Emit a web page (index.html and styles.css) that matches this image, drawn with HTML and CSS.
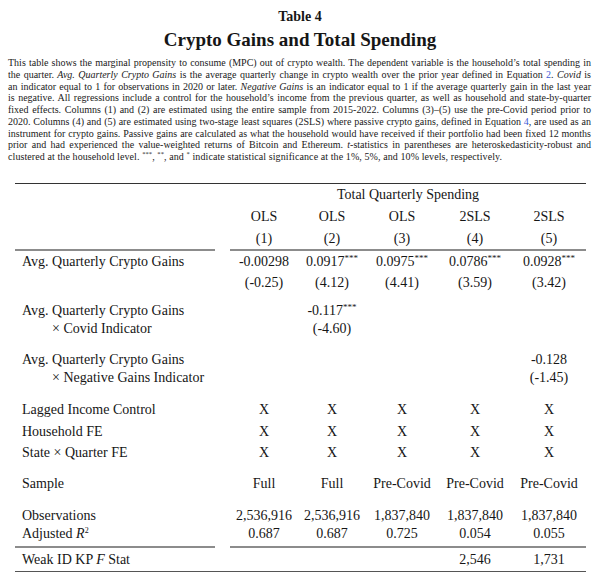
FILE: index.html
```html
<!DOCTYPE html>
<html lang="en">
<head>
<meta charset="utf-8">
<title>Table 4 — Crypto Gains and Total Spending</title>
<link rel="stylesheet" href="styles.css">
</head>
<body>
<div class="page">
  <div class="kicker">Table 4</div>
  <h1 class="title">Crypto Gains and Total Spending</h1>
  <p class="caption">
    <span class="ln">This table shows the marginal propensity to consume (MPC) out of crypto wealth. The dependent variable is the household’s total spending in</span>
    <span class="ln">the quarter. <i>Avg. Quarterly Crypto Gains</i> is the average quarterly change in crypto wealth over the prior year defined in Equation <span class="ref">2</span>. <i>Covid</i> is</span>
    <span class="ln">an indicator equal to 1 for observations in 2020 or later. <i>Negative Gains</i> is an indicator equal to 1 if the average quarterly gain in the last year</span>
    <span class="ln">is negative. All regressions include a control for the household’s income from the previous quarter, as well as household and state-by-quarter</span>
    <span class="ln">fixed effects. Columns (1) and (2) are estimated using the entire sample from 2015-2022. Columns (3)–(5) use the pre-Covid period prior to</span>
    <span class="ln">2020. Columns (4) and (5) are estimated using two-stage least squares (2SLS) where passive crypto gains, defined in Equation <span class="ref">4</span>, are used as an</span>
    <span class="ln">instrument for crypto gains. Passive gains are calculated as what the household would have received if their portfolio had been fixed 12 months</span>
    <span class="ln">prior and had experienced the value-weighted returns of Bitcoin and Ethereum. <i>t</i>-statistics in parentheses are heteroskedasticity-robust and</span>
    <span class="ln last">clustered at the household level. <sup>***</sup>, <sup>**</sup>, and <sup>*</sup> indicate statistical significance at the 1%, 5%, and 10% levels, respectively.</span>
  </p>

  <table class="reg">
    <colgroup>
      <col class="c-label">
      <col class="c-sp">
      <col class="c-a">
      <col class="c-a">
      <col class="c-b">
      <col class="c-c">
      <col class="c-c">
    </colgroup>
    <thead>
      <tr class="r-dep">
        <th></th><th class="sp"></th>
        <th colspan="5">Total Quarterly Spending</th>
      </tr>
      <tr class="r-est">
        <th></th><th class="sp"></th>
        <th>OLS</th><th>OLS</th><th>OLS</th><th>2SLS</th><th>2SLS</th>
      </tr>
      <tr class="r-num">
        <th></th><th class="sp"></th>
        <th>(1)</th><th>(2)</th><th>(3)</th><th>(4)</th><th>(5)</th>
      </tr>
    </thead>
    <tbody>
      <tr class="r-coef">
        <td class="lbl">Avg. Quarterly Crypto Gains</td><td class="sp"></td>
        <td>-0.00298</td><td>0.0917<sup>***</sup></td><td>0.0975<sup>***</sup></td><td>0.0786<sup>***</sup></td><td>0.0928<sup>***</sup></td>
      </tr>
      <tr class="r-t">
        <td class="lbl"></td><td class="sp"></td>
        <td>(-0.25)</td><td>(4.12)</td><td>(4.41)</td><td>(3.59)</td><td>(3.42)</td>
      </tr>
      <tr class="r-i1 g9">
        <td class="lbl">Avg. Quarterly Crypto Gains</td><td class="sp"></td>
        <td></td><td>-0.117<sup>***</sup></td><td></td><td></td><td></td>
      </tr>
      <tr class="r-i2">
        <td class="lbl ind">× Covid Indicator</td><td class="sp"></td>
        <td></td><td>(-4.60)</td><td></td><td></td><td></td>
      </tr>
      <tr class="r-i1 g13">
        <td class="lbl">Avg. Quarterly Crypto Gains</td><td class="sp"></td>
        <td></td><td></td><td></td><td></td><td>-0.128</td>
      </tr>
      <tr class="r-i2">
        <td class="lbl ind">× Negative Gains Indicator</td><td class="sp"></td>
        <td></td><td></td><td></td><td></td><td>(-1.45)</td>
      </tr>
      <tr class="r-fe g12">
        <td class="lbl">Lagged Income Control</td><td class="sp"></td>
        <td>X</td><td>X</td><td>X</td><td>X</td><td>X</td>
      </tr>
      <tr class="r-fe2">
        <td class="lbl">Household FE</td><td class="sp"></td>
        <td>X</td><td>X</td><td>X</td><td>X</td><td>X</td>
      </tr>
      <tr class="r-fe">
        <td class="lbl">State × Quarter FE</td><td class="sp"></td>
        <td>X</td><td>X</td><td>X</td><td>X</td><td>X</td>
      </tr>
      <tr class="r-fe g9">
        <td class="lbl">Sample</td><td class="sp"></td>
        <td>Full</td><td>Full</td><td>Pre-Covid</td><td>Pre-Covid</td><td>Pre-Covid</td>
      </tr>
      <tr class="r-obs g12">
        <td class="lbl">Observations</td><td class="sp"></td>
        <td>2,536,916</td><td>2,536,916</td><td>1,837,840</td><td>1,837,840</td><td>1,837,840</td>
      </tr>
      <tr class="r-adj">
        <td class="lbl">Adjusted <i>R</i><sup class="sq">2</sup></td><td class="sp"></td>
        <td>0.687</td><td>0.687</td><td>0.725</td><td>0.054</td><td>0.055</td>
      </tr>
      <tr class="r-weak">
        <td class="lbl">Weak ID KP <i>F</i> Stat</td><td class="sp"></td>
        <td></td><td></td><td></td><td>2,546</td><td>1,731</td>
      </tr>
    </tbody>
  </table>
</div>
</body>
</html>
```

FILE: styles.css
```css
html, body {
  margin: 0;
  padding: 0;
  background: #ffffff;
}

body {
  color: #161616;
  font-family: "Liberation Serif", "Times New Roman", serif;
}

.page {
  width: 600px;
}

.kicker {
  text-align: center;
  font-weight: bold;
  font-size: 14px;
  line-height: 18px;
  padding-top: 8px;
}

.title {
  margin: 1px 0 0;
  text-align: center;
  font-weight: bold;
  font-size: 19px;
  line-height: 26px;
}

.caption {
  margin: 4px 9px 0 8px;
  font-size: 10px;
  line-height: 11.75px;
  color: #1a1a1a;
}

.caption .ln {
  display: block;
  text-align: justify;
  text-align-last: justify;
}

.caption .ln.last {
  text-align-last: left;
  letter-spacing: 0.09px;
}

.caption .ref {
  color: #3d5bd6;
}

.caption sup {
  font-size: 6.5px;
  line-height: 0;
}

.reg {
  margin: 20px 0 0 15px;
  width: 571px;
  table-layout: fixed;
  border-collapse: separate;
  border-spacing: 0;
  font-size: 14px;
}

.c-label { width: 200px; }
.c-sp { width: 15px; }
.c-a { width: 68px; }
.c-b { width: 72px; }
.c-c { width: 74px; }

.reg th,
.reg td {
  padding: 0;
  text-align: center;
  vertical-align: top;
  font-weight: normal;
  white-space: nowrap;
}

.reg .lbl {
  text-align: left;
  padding-left: 7px;
}

.reg .lbl.ind {
  padding-left: 37px;
}

.reg sup {
  font-size: 9px;
  line-height: 0;
  position: relative;
  top: 1px;
}

.reg sup.sq {
  font-size: 8px;
}

.r-dep th {
  border-top: 1px solid #333;
  line-height: 22px;
}

.r-est th { line-height: 22px; }

.r-num th {
  line-height: 21px;
  border-bottom: 2px solid #8c8c8c;
}

.r-num th.sp { border-bottom-color: transparent; }

.r-coef td { line-height: 22px; }
.r-t td { line-height: 20px; }
.r-i1 td, .r-i2 td { line-height: 18px; }
.r-fe td { line-height: 22px; }
.r-fe2 td { line-height: 21px; }
.r-obs td { line-height: 18px; }

.r-adj td {
  line-height: 18px;
  padding-bottom: 3px;
  border-bottom: 2px solid #8c8c8c;
}

.r-adj td.sp { border-bottom-color: transparent; }

.r-weak td {
  line-height: 23px;
  border-bottom: 1px solid #555;
}

.g9 td { padding-top: 9px; }
.g12 td { padding-top: 12px; }
.g13 td { padding-top: 13px; }
```
